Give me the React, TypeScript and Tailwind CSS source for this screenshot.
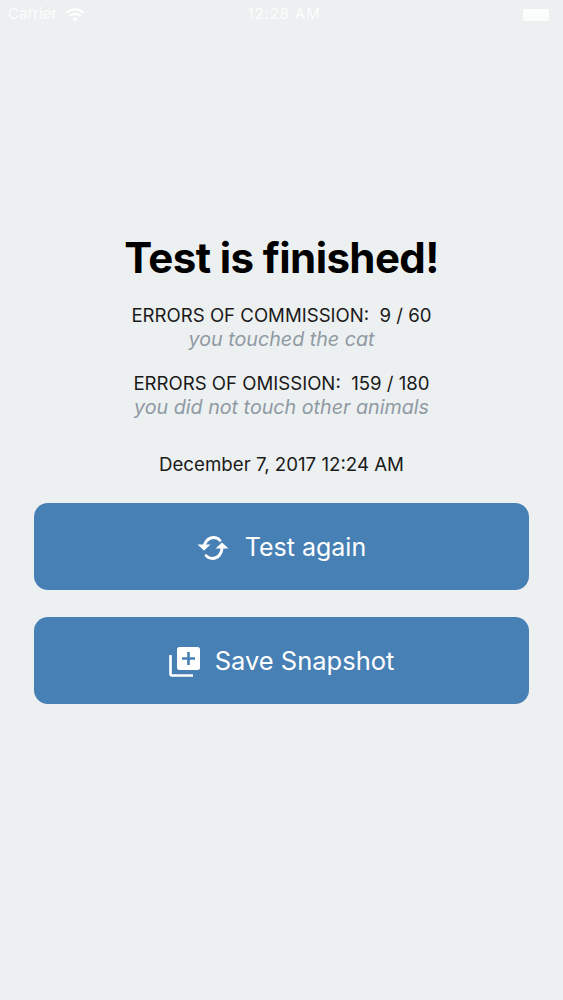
import React from "react";

function SyncIcon() {
  return (
    <svg width="32" height="26" viewBox="0 0 32 26" fill="none" className="shrink-0">
      <path d="M7 13.500C7 7.500 11 2.500 16.500 2.500c2.800 0 5 1 6.500 3" stroke="#fff" strokeWidth="2.800" strokeLinecap="round" />
      <path d="M25 12.500c0 6-4 11-9.500 11-2.800 0-5-1-6.500-3" stroke="#fff" strokeWidth="2.800" strokeLinecap="round" />
      <path d="M0.500 14.500L7 8.500l6.500 6z" fill="#fff" transform="rotate(180 7 12)" />
      <path d="M18.500 13.500L25 7.500l6.500 6z" fill="#fff" />
    </svg>
  );
}

function LibraryAddIcon() {
  return (
    <svg width="31" height="30" viewBox="0 0 31 30" fill="none" className="shrink-0">
      <path d="M1.500 8v19a1.500 1.500 0 0 0 1.500 1.500h21" stroke="#fff" strokeWidth="2.600" />
      <rect x="8" y="0" width="23" height="23" rx="2.500" fill="#fff" />
      <path d="M19.500 5v13M13 11.500h13" stroke="#4780b5" strokeWidth="2.600" />
    </svg>
  );
}

export default function App() {
  return (
    <div className="h-[1000px] w-[563px] overflow-hidden bg-[#edf0f1] font-['Inter','Liberation_Sans',sans-serif]">
      <div className="relative flex h-[30px] items-center justify-between pb-[1px] pl-2 pr-[14px] text-[15px] text-white/80">
        <div className="flex items-center gap-2">
          <span>Carrier</span>
          <svg width="20" height="14" viewBox="0 0 18 13" fill="none">
            <path d="M1 4.500a11.500 11.500 0 0 1 16 0M4 7.500a7 7 0 0 1 10 0" stroke="#fff" strokeWidth="2" />
            <path d="M6.500 10a3.500 3.500 0 0 1 5 0L9 12.500z" fill="#fff" />
          </svg>
        </div>
        <span className="mr-[40px] tracking-[0.9px]">12:28 AM</span>
        <div className="h-[12px] w-[26px] rounded-[2px] bg-white/80" />
      </div>

      <div className="flex flex-col items-center pt-[200px]">
        <h1 className="text-[42px] font-bold leading-[56px] tracking-[-0.6px] text-black">Test is finished!</h1>

        <p className="mt-[17px] whitespace-pre text-[18.600px] leading-[24px] text-[#1a1a1a]">ERRORS OF COMMISSION:  9 / 60</p>
        <p className="text-[19.700px] italic leading-[24px] text-[#8f9aa3]">you touched the cat</p>

        <p className="mt-[20px] whitespace-pre text-[18.600px] leading-[24px] text-[#1a1a1a]">ERRORS OF OMISSION:  159 / 180</p>
        <p className="text-[19.700px] italic leading-[24px] text-[#8f9aa3]">you did not touch other animals</p>

        <p className="mt-[34px] text-[18.700px] leading-[24px] text-[#1a1a1a]">December 7, 2017 12:24 AM</p>

        <div className="mt-[26px] flex w-[495px] flex-col gap-[27px]">
          <button className="flex h-[87px] items-center justify-center gap-[16px] rounded-[14px] bg-[#4780b5] pt-[2px] text-[25px] text-white">
            <SyncIcon />
            <span>Test again</span>
          </button>
          <button className="flex h-[87px] items-center justify-center gap-[15px] rounded-[14px] bg-[#4780b5] pt-[2px] text-[25.500px] text-white">
            <LibraryAddIcon />
            <span>Save Snapshot</span>
          </button>
        </div>
      </div>
    </div>
  );
}
